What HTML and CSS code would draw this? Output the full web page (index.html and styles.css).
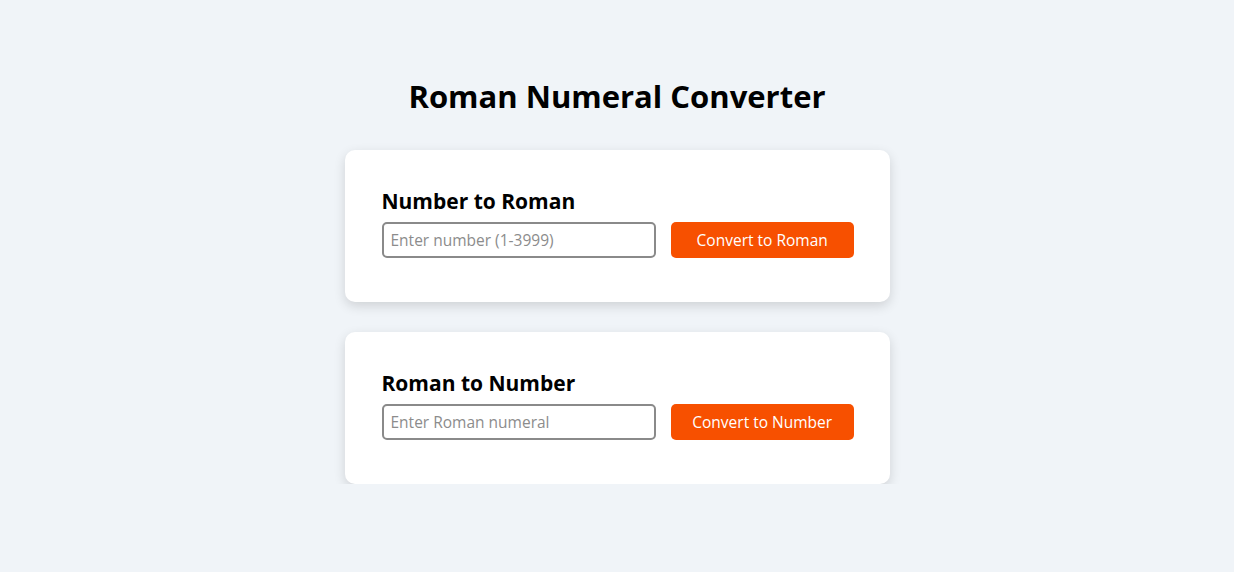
FILE: index.html
```html
<!DOCTYPE html>
<html lang="en">
<head>
<meta charset="utf-8">
<title>Roman Numeral Converter</title>
<link rel="stylesheet" href="styles.css">
</head>
<body>
<main class="page">
  <h1 class="title">Roman Numeral Converter</h1>
  <section class="card">
    <h2 class="card-title">Number to Roman</h2>
    <div class="row">
      <input class="field" type="text" placeholder="Enter number (1-3999)">
      <button class="btn" type="button">Convert to Roman</button>
    </div>
  </section>
  <section class="card">
    <h2 class="card-title">Roman to Number</h2>
    <div class="row">
      <input class="field" type="text" placeholder="Enter Roman numeral">
      <button class="btn" type="button">Convert to Number</button>
    </div>
  </section>
</main>
</body>
</html>
```
FILE: styles.css
```css
* { box-sizing: border-box; }
html, body { margin: 0; padding: 0; }
body {
  background: #f0f4f8;
  font-family: "Open Sans", "Noto Sans", sans-serif;
  color: #000;
}
.page {
  width: 545px;
  margin: 0 auto;
  padding-top: 74px;
  display: flex;
  flex-direction: column;
  gap: 30px;
}
.title {
  margin: 0 0 2px;
  text-align: center;
  font-size: 31px;
  font-weight: 700;
  line-height: 44px;
}
.card {
  background: #fff;
  border-radius: 10px;
  box-shadow: 0 4px 12px rgba(0, 0, 0, 0.14);
  padding: 37px 36px 44px 37px;
  height: 152px;
}
.card-title {
  margin: 0 0 6px;
  font-size: 21px;
  font-weight: 700;
  line-height: 29px;
}
.row {
  display: flex;
  gap: 15px;
}
.field {
  width: 275px;
  height: 36px;
  border: 2px solid #8a8a8a;
  border-radius: 5px;
  padding: 0 7px;
  font-family: inherit;
  font-size: 15.5px;
  color: #333;
  background: #fff;
}
.field::placeholder { color: #8c8c8c; }
.btn {
  width: 183px;
  height: 36px;
  border: 0;
  border-radius: 5px;
  background: #f75000;
  color: #fff;
  font-family: inherit;
  font-size: 15.5px;
  cursor: pointer;
}
```
